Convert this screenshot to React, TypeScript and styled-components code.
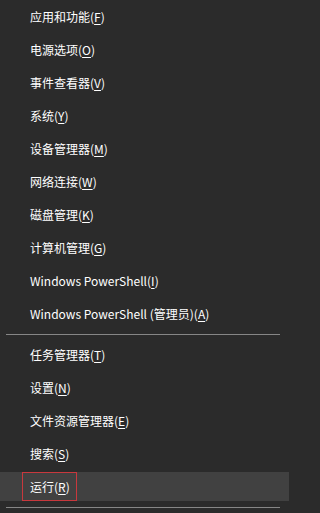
import React from "react";
import styled, { createGlobalStyle } from "styled-components";

const Global = createGlobalStyle`
  html, body { margin: 0; padding: 0; background: #2b2b2b; }
  body { width: 289px; height: 513px; overflow: hidden; }
`;

const Menu = styled.div`
  width: 289px;
  height: 513px;
  background: #2b2b2b;
  display: flex;
  flex-direction: column;
  padding-top: 2px;
  box-sizing: border-box;
  font-family: "Noto Sans CJK SC", "Noto Sans", sans-serif;
  font-size: 12px;
  color: #ffffff;
`;

const Group = styled.div`
  display: flex;
  flex-direction: column;
  gap: 4px;
`;

const Item = styled.div<{ $active?: boolean }>`
  height: 29px;
  display: flex;
  align-items: center;
  padding-left: 30px;
  background: ${(p) => (p.$active ? "#414141" : "transparent")};
  position: relative;
  line-height: 1;
`;

const Label = styled.span<{ $boxed?: boolean }>`
  position: relative;
  white-space: nowrap;
  ${(p) =>
    p.$boxed &&
    `
    &::after {
      content: "";
      position: absolute;
      left: -8px;
      right: -7px;
      top: -9px;
      bottom: -8px;
      border: 1px solid #c8383d;
    }
  `}
`;

const Key = styled.u`
  text-decoration: underline;
  text-underline-offset: 2px;
  text-decoration-thickness: 1px;
`;

const Separator = styled.div`
  height: 1px;
  margin: 6px 9px 5px 6px;
  background: #868686;
`;

const BottomLine = styled.div`
  height: 1px;
  margin: 6px 9px 0 6px;
  background: #868686;
`;

type Entry = { text: string; key: string; active?: boolean };

const top: Entry[] = [
  { text: "应用和功能", key: "F" },
  { text: "电源选项", key: "O" },
  { text: "事件查看器", key: "V" },
  { text: "系统", key: "Y" },
  { text: "设备管理器", key: "M" },
  { text: "网络连接", key: "W" },
  { text: "磁盘管理", key: "K" },
  { text: "计算机管理", key: "G" },
  { text: "Windows PowerShell", key: "I" },
  { text: "Windows PowerShell (管理员)", key: "A" },
];

const bottom: Entry[] = [
  { text: "任务管理器", key: "T" },
  { text: "设置", key: "N" },
  { text: "文件资源管理器", key: "E" },
  { text: "搜索", key: "S" },
  { text: "运行", key: "R", active: true },
];

const Row = ({ e }: { e: Entry }) => (
  <Item $active={e.active}>
    <Label $boxed={e.active}>
      {e.text}(<Key>{e.key}</Key>)
    </Label>
  </Item>
);

export default function App() {
  return (
    <>
      <Global />
      <Menu>
        <Group>
          {top.map((e) => (
            <Row key={e.key} e={e} />
          ))}
        </Group>
        <Separator />
        <Group>
          {bottom.map((e) => (
            <Row key={e.key} e={e} />
          ))}
        </Group>
        <BottomLine />
      </Menu>
    </>
  );
}
